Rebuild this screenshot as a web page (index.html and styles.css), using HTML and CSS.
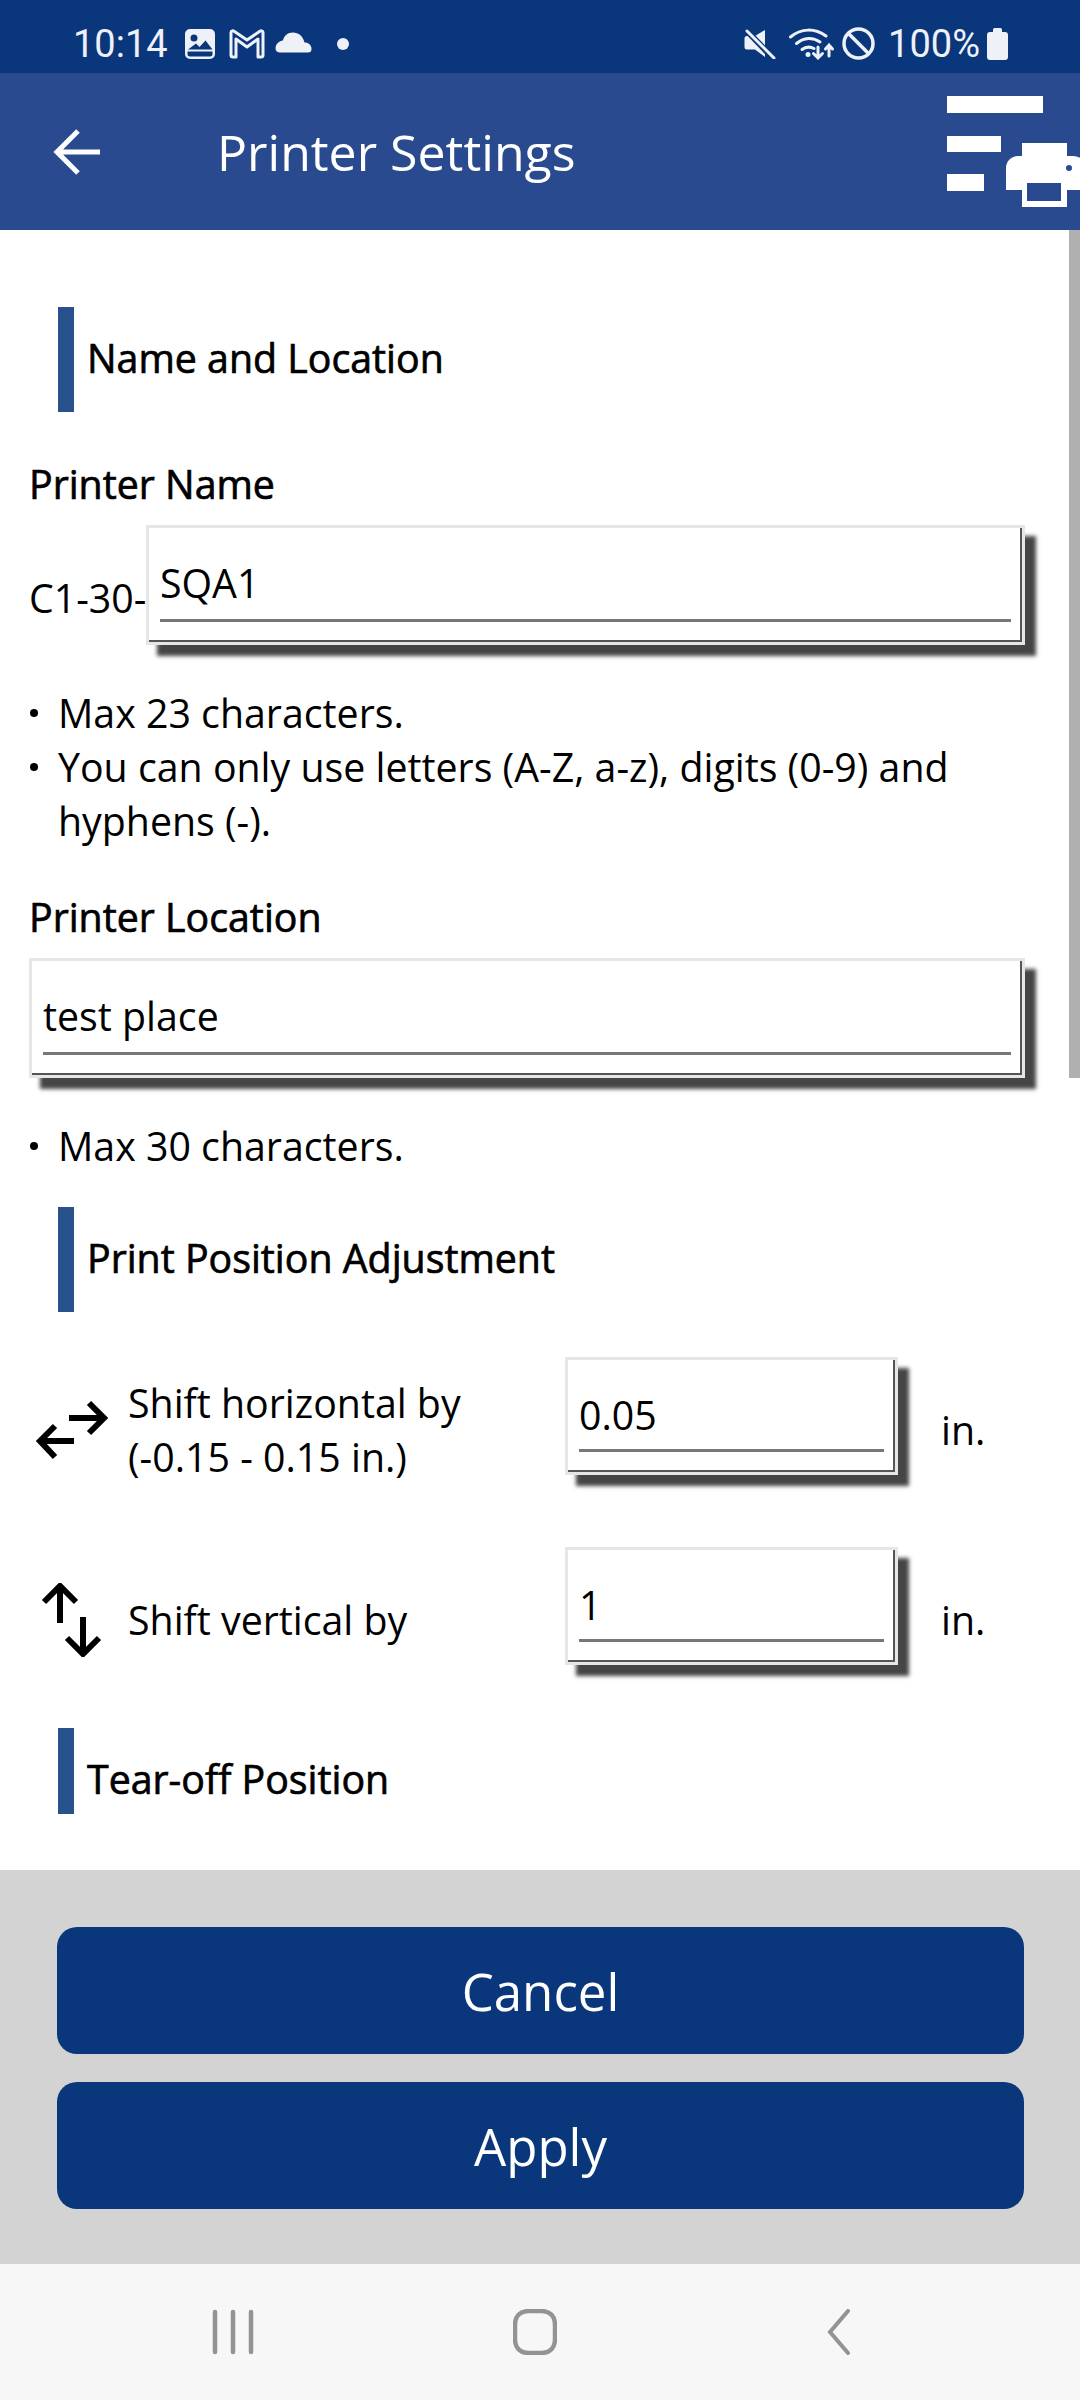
FILE: index.html
```html
<!DOCTYPE html>
<html lang="en">
<head>
<meta charset="utf-8">
<title>Printer Settings</title>
<link rel="stylesheet" href="styles.css">
</head>
<body>
<div class="screen">
  <header class="status">
    <div class="status-side">
      <span class="clock">10:14</span>
      <svg class="si-image" width="32" height="32" viewBox="0 0 32 32"><path fill-rule="evenodd" fill="#eef1f7" d="M6 1h20a5 5 0 0 1 5 5v20a5 5 0 0 1-5 5H6a5 5 0 0 1-5-5V6a5 5 0 0 1 5-5zM3.500 23.500v2.500a2.500 2.500 0 0 0 2.500 2.500h20a2.500 2.500 0 0 0 2.500-2.500v-2.500zM10 6.500a3.500 3.500 0 1 0 0 7a3.500 3.500 0 0 0 0-7zM4 21.500h24.500l-7-9-6 6.500-3.500-3.500z"/></svg>
      <svg class="si-mail" width="36" height="30" viewBox="0 0 36 30"><path fill="none" stroke="#eef1f7" stroke-width="3" stroke-linejoin="round" d="M2 3.500c0-2 2-2 3.500-1L18 11 30.500 2.500c1.500-1 3.500-1 3.500 1V26a2 2 0 0 1-2 2h-3V10L18 18 7 10v18H4a2 2 0 0 1-2-2z"/></svg>
      <svg class="si-cloud" width="37" height="21" viewBox="0 0 37 21"><path fill="#eef1f7" d="M5 20.500h28a3.500 3.500 0 0 0 3.500-3.500c0-4-3-6.500-7-6.500C28 4 23.500 .5 18 .5 12.500 .5 9 4 8 8.500 3.500 9 .5 12.500 .5 16.500c0 2.500 2 4 4.500 4z"/></svg>
      <span class="si-dot"></span>
    </div>
    <div class="status-side">
      <svg class="si-mute" width="32" height="30" viewBox="0 0 32 30"><path fill="#eef1f7" d="M21 1v27L11 20.500H3A2.500 2.500 0 0 1 .5 18V9.500A2.500 2.500 0 0 1 3 7h8z"/><path stroke="#0a367b" stroke-width="6" d="M1 0l28 29"/><path stroke="#eef1f7" stroke-width="3" stroke-linecap="round" d="M3 2l27 27"/></svg>
      <svg class="si-wifi" width="46" height="34" viewBox="0 0 46 34"><g fill="none" stroke="#eef1f7" stroke-width="3" stroke-linecap="round"><path d="M1.500 10C12 1 26 1 37 9"/><path d="M7.500 16.500C15 10 24 10 31 15"/><path d="M13 22.500c4-3 8-3 12-1"/><path d="M29 20v11M24.500 26.500L29 31l4.500-4.500"/><path d="M40 29V18M36.500 22L40 18l3.500 4"/></g><circle cx="19" cy="27.500" r="2.500" fill="#eef1f7"/></svg>
      <svg class="si-block" width="33" height="33" viewBox="0 0 33 33"><circle cx="16.500" cy="16.500" r="14.500" fill="none" stroke="#eef1f7" stroke-width="3.500"/><path stroke="#eef1f7" stroke-width="3.500" d="M6.500 6.500l20 20"/></svg>
      <span class="battery-text">100%</span>
      <svg class="si-battery" width="21" height="32" viewBox="0 0 21 32"><path fill="#eef1f7" d="M6 1.500A1.500 1.500 0 0 1 7.500 0h6A1.500 1.500 0 0 1 15 1.500V4h3a3 3 0 0 1 3 3v22a3 3 0 0 1-3 3H3a3 3 0 0 1-3-3V7a3 3 0 0 1 3-3h3z"/></svg>
    </div>
  </header>

  <div class="appbar">
    <svg class="back" width="48" height="48" viewBox="0 0 48 48"><path fill="none" stroke="#fff" stroke-width="5" d="M47 24H5M25 3L4 24l21 21"/></svg>
    <h1 class="title">Printer Settings</h1>
    <svg class="menu-print" width="134" height="115" viewBox="0 0 134 115"><g fill="#fff"><rect x="0" y="0" width="96" height="17"/><rect x="0" y="40" width="54" height="16"/><rect x="0" y="78" width="37" height="17"/><path fill-rule="evenodd" d="M75 47h45v13h6a14 14 0 0 1 14 14v20h-20v17H75V94H59V72a12 12 0 0 1 12-12h4zM80 87v18h34V87zM122 69a3 3 0 1 0 0 6a3 3 0 0 0 0-6z"/></g></svg>
  </div>

  <main class="content">
    <div class="scroller">
      <section class="sec-name">
        <div class="sec-head"><span class="sec-bar"></span><h2 class="sec-title">Name and Location</h2></div>
        <div class="label label-first">Printer Name</div>
        <div class="name-row">
          <span class="prefix">C1-30-</span>
          <div class="input input-grow"><div class="field">SQA1</div></div>
        </div>
        <ul class="notes">
          <li>Max 23 characters.</li>
          <li>You can only use letters (A-Z, a-z), digits (0-9) and hyphens (-).</li>
        </ul>
        <div class="label label-next">Printer Location</div>
        <div class="input input-wide"><div class="field">test place</div></div>
        <ul class="notes">
          <li>Max 30 characters.</li>
        </ul>
      </section>

      <section class="sec-shift">
        <div class="sec-head"><span class="sec-bar"></span><h2 class="sec-title">Print Position Adjustment</h2></div>
        <div class="shift-list">
          <div class="shift-row">
            <svg class="shift-icon" width="99" height="60" viewBox="0 0 99 60"><g fill="none" stroke="#000" stroke-width="6"><path d="M39 18h33M59 3l15 15-15 15"/><path d="M44 41H12M25 26L10 41l15 16"/></g></svg>
            <div class="shift-label">Shift horizontal by<br>(-0.15 - 0.15 in.)</div>
            <div class="input input-small"><div class="field">0.05</div></div>
            <span class="unit">in.</span>
          </div>
          <div class="shift-row">
            <svg class="shift-icon" width="99" height="74" viewBox="0 0 99 74"><g fill="none" stroke="#000" stroke-width="6"><path d="M30 40V5M14 19L30 3l16 16"/><path d="M53 34v35M37 55l16 16 16-16"/></g></svg>
            <div class="shift-label">Shift vertical by</div>
            <div class="input input-small"><div class="field">1</div></div>
            <span class="unit">in.</span>
          </div>
        </div>
      </section>

      <section class="sec-tear">
        <div class="sec-head"><span class="sec-bar"></span><h2 class="sec-title">Tear-off Position</h2></div>
      </section>
    </div>
    <div class="scrollbar"></div>
  </main>

  <footer class="actions">
    <button class="btn">Cancel</button>
    <button class="btn">Apply</button>
  </footer>

  <nav class="navbar">
    <svg width="44" height="46" viewBox="0 0 44 46"><g stroke="#939393" stroke-width="4.500" stroke-linecap="round"><path d="M4 3v40M22 3v40M40 3v40"/></g></svg>
    <svg width="44" height="46" viewBox="0 0 44 46"><path fill="none" stroke="#939393" stroke-width="4.500" d="M16 2h12c9 0 14 5 14 14v14c0 9-5 14-14 14H16C7 44 2 39 2 30V16C2 7 7 2 16 2z"/></svg>
    <svg width="44" height="46" viewBox="0 0 44 46"><path fill="none" stroke="#939393" stroke-width="4" stroke-linecap="round" d="M33 2L15 23l18 21"/></svg>
  </nav>
</div>
</body>
</html>
```
FILE: styles.css
```css
* { box-sizing: border-box; }
html, body { margin: 0; padding: 0; background: #fff; }
body { font-family: "Open Sans", "Noto Sans", sans-serif; color: #000; }

.screen { width: 1080px; height: 2400px; display: flex; flex-direction: column; overflow: hidden; }

.status { height: 73px; background: #0a367b; color: #eef1f7; display: flex; justify-content: space-between; align-items: center; padding: 14px 72px 0 73px; font-family: Roboto, sans-serif; font-size: 38px; }
.status-side { display: flex; align-items: center; }
.si-image { margin-left: 16px; }
.si-mail { margin-left: 13px; }
.si-cloud { margin-left: 10px; margin-top: -2px; }
.si-dot { width: 12px; height: 12px; border-radius: 50%; background: #eef1f7; margin-left: 25px; }
.si-wifi { margin-left: 13px; }
.si-block { margin-left: 7px; }
.battery-text { margin-left: 13px; }
.si-battery { margin-left: 7px; }

.appbar { height: 157px; background: #294a8e; display: flex; align-items: center; padding-left: 53px; position: relative; color: #fff; overflow: hidden; }
.back { flex: none; }
.title { margin: 0 0 0 116px; font-size: 50px; font-weight: 400; line-height: 68px; }
.menu-print { position: absolute; left: 947px; top: 23px; }

.content { height: 1640px; padding-bottom: 56px; position: relative; background: #fff; }
.scroller { height: 1584px; overflow: hidden; }
.scrollbar { position: absolute; top: 0; right: 0; width: 11px; height: 848px; background: #b0b0b0; }

.sec-name { padding-top: 77px; }
.sec-shift { padding-top: 34px; }
.sec-tear { padding-top: 35px; }
.sec-head { display: flex; align-items: center; margin-left: 58px; gap: 13px; }
.sec-bar { width: 16px; height: 105px; background: #27508d; flex: none; }
.sec-title { margin: 0 0 4px; font-size: 39.3px; font-weight: 400; line-height: 54px; -webkit-text-stroke: 0.7px #000; }

.label { margin-left: 29px; font-size: 39.3px; line-height: 54px; -webkit-text-stroke: 0.7px #000; }
.label-first { margin-top: 45px; }
.label-next { margin-top: 42px; }

.input { border: 3px solid #e6e6e4; background: #fff; height: 120px; padding: 0 11px; box-shadow: inset -2px -2px 0 #555, 11px 11px 4px #454545; }
.field { font-size: 39.3px; line-height: 54px; height: 94px; padding-top: 28px; padding-bottom: 9px; border-bottom: 3px solid #777; white-space: nowrap; }

.name-row { display: flex; align-items: flex-end; margin: 14px 55px 0 29px; }
.prefix { flex: none; width: 117px; font-size: 39.3px; line-height: 54px; padding-bottom: 20px; white-space: nowrap; }
.input-grow { flex: 1; }
.input-wide { margin: 14px 55px 0 29px; }

.notes { list-style: none; margin: 41px 50px 0 29px; padding: 0; font-size: 39.3px; line-height: 54px; }
.notes li { position: relative; padding-left: 29px; }
.notes li::before { content: ""; position: absolute; left: 1px; top: 23px; width: 8px; height: 8px; border-radius: 50%; background: #000; }

.shift-list { display: flex; flex-direction: column; gap: 44px; margin-top: 45px; }
.shift-row { display: grid; grid-template-columns: 99px 436px 333px auto; align-items: center; padding-left: 30px; }
.shift-icon { display: block; }
.shift-label { font-size: 39.3px; line-height: 54px; margin-left: -1px; }
.input-small { height: 118px; margin-bottom: 28px; }
.input-small .field { height: 92px; padding-top: 28px; padding-bottom: 7px; }
.unit { font-size: 39.3px; line-height: 54px; margin-left: 43px; }

.actions { height: 394px; background: #d3d3d3; padding: 57px 56px 0 57px; display: flex; flex-direction: column; gap: 28px; }
.btn { height: 127px; border: 0; border-radius: 20px; background: #0a367b; color: #fff; font-family: "Open Sans", sans-serif; font-size: 51px; padding: 0; }

.navbar { height: 136px; background: #f7f7f7; display: flex; justify-content: space-between; align-items: center; padding: 0 221px 0 211px; }
```
